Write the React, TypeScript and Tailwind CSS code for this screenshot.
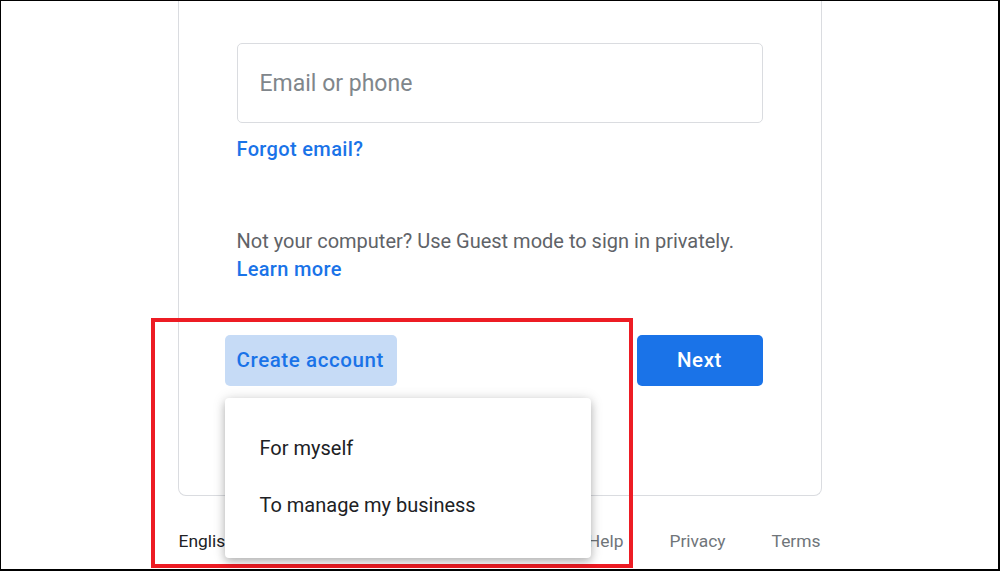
export default function App() {
  return (
    <div className="relative h-[571px] w-[1000px] overflow-hidden border-t border-l border-r-2 border-b-2 border-black bg-white font-['Roboto','Liberation_Sans',sans-serif]">
      <div className="mx-auto w-[644px] rounded-b-[8px] border border-t-0 border-[#dadce0] px-[58px] pt-[42px] pb-[109px]">
        <div className="flex h-[80px] items-center rounded-[5px] border border-[#dadce0] px-[22px] pt-[2px]">
          <span className="text-[23px] text-[#80868b]">Email or phone</span>
        </div>
        <div className="mt-[12px] text-[20px] leading-[28px] font-medium tracking-[0.35px] text-[#1a73e8]">Forgot email?</div>

        <div className="mt-[64px] text-[20px] leading-[28px] text-[#5f6368]">
          Not your computer? Use Guest mode to sign in privately.
        </div>
        <div className="text-[20px] leading-[28px] font-medium tracking-[0.35px] text-[#1a73e8]">Learn more</div>

        <div className="mt-[52px] flex items-center justify-between">
          <div className="relative -ml-[12px]">
            <button
              type="button"
              className="flex h-[51px] w-[172px] items-center rounded-[5px] bg-[#c6dbf6] px-[12px] text-[20.5px] font-medium tracking-[0.6px] text-[#1a73e8]"
            >
              Create account
            </button>
            <div className="absolute top-[63px] left-0 z-10 w-[366px] rounded-[4px] bg-white pt-[21px] pb-[25px] shadow-[0_4px_8px_rgba(0,0,0,0.22),0_1px_14px_rgba(0,0,0,0.14)]">
              <div className="flex h-[57px] items-center pl-[35px] text-[20px] text-[#202124]">For myself</div>
              <div className="flex h-[57px] items-center pl-[35px] text-[20px] text-[#202124]">To manage my business</div>
            </div>
          </div>
          <button
            type="button"
            className="flex h-[51px] w-[126px] items-center justify-center rounded-[5px] bg-[#1a73e8] text-[20.5px] font-medium tracking-[0.6px] text-white"
          >
            Next
          </button>
        </div>
      </div>

      <div className="mx-auto mt-[33px] flex w-[644px] items-center justify-between pl-[1px] pr-[1px] text-[17.4px] leading-[24px]">
        <span className="text-[#202124]">English (United States)</span>
        <div className="flex gap-[46px] text-[#70757a]">
          <span>Help</span>
          <span>Privacy</span>
          <span>Terms</span>
        </div>
      </div>

      <div className="pointer-events-none absolute top-[317px] left-[150px] h-[250px] w-[482px] border-4 border-[#ed1c24]" />
    </div>
  );
}
